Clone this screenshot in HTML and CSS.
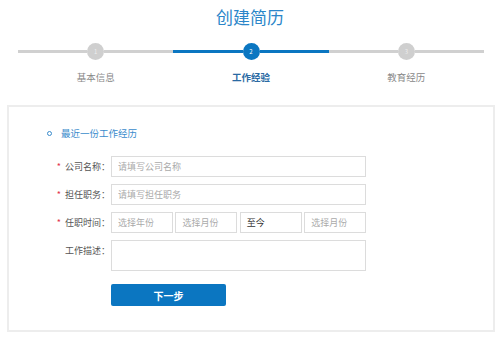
FILE: index.html
```html
<!DOCTYPE html>
<html lang="zh-CN">
<head>
  <meta charset="UTF-8">
  <title>创建简历</title>
  <link rel="stylesheet" href="styles.css">
</head>
<body>
  <h1 class="title">创建简历</h1>

  <div class="steps">
    <div class="step">
      <div class="track"><span class="line"></span><span class="dot">1</span><span class="line"></span></div>
      <div class="step-name">基本信息</div>
    </div>
    <div class="step active">
      <div class="track"><span class="line"></span><span class="dot">2</span><span class="line"></span></div>
      <div class="step-name">工作经验</div>
    </div>
    <div class="step">
      <div class="track"><span class="line"></span><span class="dot">3</span><span class="line"></span></div>
      <div class="step-name">教育经历</div>
    </div>
  </div>

  <div class="card">
    <div class="section-title"><span class="ring"></span>最近一份工作经历</div>

    <form class="form" onsubmit="return false">
      <label class="label"><i>*</i>公司名称：</label>
      <input class="field" type="text" placeholder="请填写公司名称">

      <label class="label"><i>*</i>担任职务：</label>
      <input class="field" type="text" placeholder="请填写担任职务">

      <label class="label"><i>*</i>任职时间：</label>
      <div class="dates">
        <div class="select">选择年份</div>
        <div class="select">选择月份</div>
        <div class="select filled">至今</div>
        <div class="select">选择月份</div>
      </div>

      <label class="label">工作描述：</label>
      <textarea class="field area"></textarea>

      <span></span>
      <button class="next" type="submit">下一步</button>
    </form>
  </div>
</body>
</html>
```

FILE: styles.css
```css
body {
  margin: 0;
  background: #fff;
  font-family: "Noto Sans CJK SC", "Noto Sans", sans-serif;
  color: #555;
}
.title {
  margin: 0;
  padding-top: 6px;
  font-size: 17px;
  line-height: 22px;
  font-weight: normal;
  text-align: center;
  color: #2b86c9;
}
.steps {
  display: grid;
  grid-template-columns: repeat(3, 1fr);
  width: 466px;
  margin: 15px 0 0 18px;
}
.track {
  display: flex;
  align-items: center;
  height: 17px;
}
.line {
  flex: 1;
  height: 3px;
  background: #d0d0d0;
}
.dot {
  width: 17px;
  height: 17px;
  border-radius: 50%;
  background: #cfcfcf;
  color: #eee;
  font-size: 6px;
  line-height: 17px;
  text-align: center;
}
.step-name {
  margin-top: 10px;
  font-size: 9.5px;
  line-height: 14px;
  text-align: center;
  color: #888;
}
.active .line,
.active .dot {
  background: #0b76c1;
}
.active .dot {
  color: #fff;
}
.active .step-name {
  color: #2a6aa3;
  font-weight: bold;
}
.card {
  margin: 21px 5px 0 7px;
  border: 2px solid #ededed;
  padding: 19px 0 24px;
}
.section-title {
  display: flex;
  align-items: center;
  padding-left: 38px;
  font-size: 9.5px;
  line-height: 14px;
  color: #3a8bcc;
}
.ring {
  width: 3px;
  height: 3px;
  border: 1px solid #3a8bcc;
  border-radius: 50%;
  margin-right: 9px;
}
.form {
  display: grid;
  grid-template-columns: 102px 255px;
  row-gap: 7px;
  margin-top: 16px;
}
.label {
  text-align: right;
  padding-right: 1px;
  font-size: 9px;
  line-height: 21px;
  color: #555;
}
.label i {
  font-style: normal;
  color: #e2304a;
  margin-right: 4px;
}
.field {
  box-sizing: border-box;
  height: 21px;
  margin: 0;
  padding: 0 6px;
  border: 1px solid #dcdcdc;
  border-radius: 0;
  font-family: inherit;
  font-size: 9px;
  color: #333;
  outline: none;
}
.field::placeholder {
  color: #aaa;
}
.area {
  height: 31px;
  resize: none;
}
.dates {
  display: grid;
  grid-template-columns: repeat(4, 1fr);
  column-gap: 2.5px;
}
.select {
  box-sizing: border-box;
  height: 21px;
  padding: 0 6px;
  border: 1px solid #dcdcdc;
  font-size: 9px;
  line-height: 19px;
  color: #aaa;
}
.select.filled {
  color: #333;
}
.next {
  width: 115px;
  height: 22px;
  margin-top: 6px;
  border: none;
  border-radius: 2px;
  background: #0b76c1;
  color: #fff;
  font-family: inherit;
  font-size: 10px;
  font-weight: bold;
  cursor: pointer;
}
```
